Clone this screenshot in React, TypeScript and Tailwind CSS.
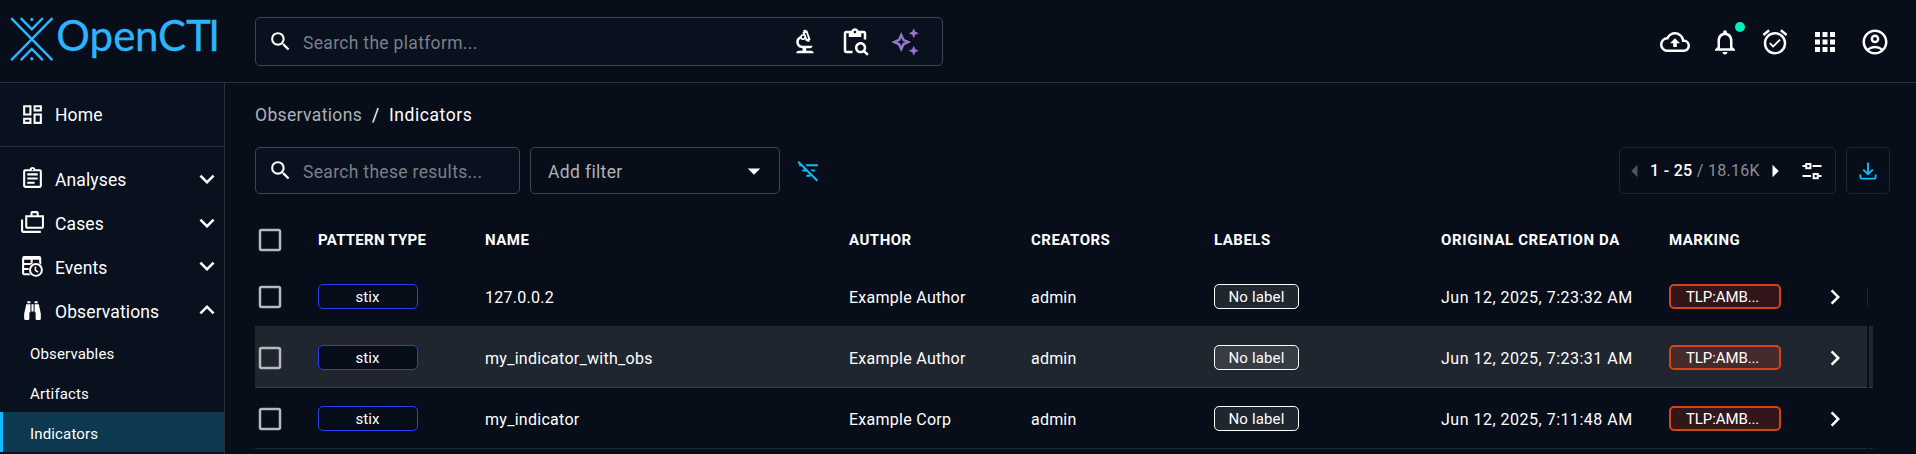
import type { ReactNode } from "react";
import {
  MdApps, MdArrowDropDown, MdArrowLeft, MdArrowRight, MdCheckBoxOutlineBlank, MdChevronRight,
  MdContentPasteSearch, MdExpandLess, MdExpandMore, MdFilterListOff, MdNotificationsNone,
  MdOutlineAccountCircle, MdOutlineAlarmOn, MdOutlineAssignment, MdOutlineAutoAwesome,
  MdOutlineBackup, MdOutlineBiotech, MdOutlineCases, MdOutlineDashboard, MdSearch,
} from "react-icons/md";

function Logo() {
  return (
    <svg width="224" height="82" viewBox="0 0 224 82" fill="none" stroke="#2cb5ff" strokeWidth="2.4">
      <path d="M11.2 18.2 52.4 60.2M52.4 18.2 11.2 60.2M20.8 18.2 31.8 29.4 42.8 18.2M20.8 60.2 31.8 49 42.8 60.2" />
      <path d="m31.8 17.6 2 2-2 2-2-2zM31.8 56.8l2 2-2 2-2-2z" fill="#2cb5ff" stroke="none" />
      <text
        x="56.3 89.6 113.2 135 158 186 208.2"
        y="51.3"
        fill="#2cb5ff"
        stroke="#2cb5ff"
        strokeWidth="0.3"
        className="font-[Lato] text-[42px]"
      >
        OpenCTI
      </text>
    </svg>
  );
}

function TableClockIcon() {
  return (
    <svg width="25" height="25" viewBox="0 0 24 24" fill="none">
      <rect x="3" y="3" width="16.4" height="16.4" rx="1" stroke="white" strokeWidth="2" />
      <path d="M3 4.5h16.4M3 9.6h16.4M3 14.4h9M11.2 4v15" stroke="white" strokeWidth="1.9" />
      <circle cx="15.3" cy="15.3" r="7.2" fill="#09101e" />
      <circle cx="15.3" cy="15.3" r="5.7" stroke="white" strokeWidth="1.9" />
      <path d="M14.8 12v3.7l2.6 1.6" stroke="white" strokeWidth="1.5" />
    </svg>
  );
}

function BinocularsIcon() {
  return (
    <svg width="25" height="25" viewBox="0 0 24 24" fill="white">
      <path d="M11,6H13V13H11V6M9,20A1,1 0 0,1 8,21H5A1,1 0 0,1 4,20V15L6,6H10V13A1,1 0 0,1 9,14V20M10,5H7V3H10V5M15,20V14A1,1 0 0,1 14,13V6H18L20,15V20A1,1 0 0,1 19,21H16A1,1 0 0,1 15,20M14,5V3H17V5H14Z" />
    </svg>
  );
}

function TuneIcon() {
  return (
    <svg width="20" height="18" viewBox="0 0 20 18" fill="none" stroke="white" strokeWidth="2">
      <path d="M0.5 4H3.5M10.5 4H19.5M0.5 14H9M16.5 14H19.5" />
      <rect x="4.2" y="2" width="4.2" height="4.2" />
      <rect x="11.6" y="12" width="4.2" height="4.2" />
    </svg>
  );
}

function DownloadIcon() {
  return (
    <svg width="18" height="18" viewBox="0 0 18 18" fill="none" stroke="#0fbcff" strokeWidth="1.9">
      <path d="M9 0.5v11.5M4.2 7.6 9 12.2 13.8 7.6" />
      <path d="M1.4 12.6v2.8q0 1.2 1.2 1.2h12.8q1.2 0 1.2-1.2v-2.8" />
    </svg>
  );
}

function NavItem({ icon, label, open }: { icon: ReactNode; label: string; open?: boolean }) {
  return (
    <div className="flex h-[43.75px] items-center pl-5 pr-[2px] text-white">
      <span className="flex w-[35px]">{icon}</span>
      <span
        className={
          open === undefined
            ? "flex-1 pt-px text-[17.5px] leading-6 tracking-[0.12px]"
            : "flex-1 pt-[3px] text-[17.5px] leading-6 tracking-[0.12px]"
        }
      >
        {label}
      </span>
      {open === undefined ? null : open ? <MdExpandLess size={30} /> : <MdExpandMore size={30} />}
    </div>
  );
}

function SubItem({ label, active }: { label: string; active?: boolean }) {
  return (
    <div
      className={
        active
          ? "flex h-10 items-center border-l-[3px] border-[#0fbcff] bg-[#0c3850] pl-[27px]"
          : "flex h-10 items-center pl-[30px]"
      }
    >
      <span className="pt-[3px] text-[15px] leading-5 tracking-[0.15px] text-white">{label}</span>
    </div>
  );
}

const columns = "grid h-full flex-1 grid-cols-[63px_167px_364px_182px_183px_227px_228px_151px_1fr] items-center";

const rows = [
  { name: "127.0.0.2", author: "Example Author", date: "Jun 12, 2025, 7:23:32 AM", hovered: false },
  { name: "my_indicator_with_obs", author: "Example Author", date: "Jun 12, 2025, 7:23:31 AM", hovered: true },
  { name: "my_indicator", author: "Example Corp", date: "Jun 12, 2025, 7:11:48 AM", hovered: false },
];

function Row({ row, first, last }: { row: (typeof rows)[number]; first: boolean; last: boolean }) {
  const tone = row.hovered
    ? "border-b border-[#3a3f47] bg-[#20262f]"
    : last
      ? "border-b border-[#23282f]"
      : "border-b border-[#20262f]";
  return (
    <div className="flex h-[61px]">
      <div className={`${columns} pt-px ${tone}`}>
        <MdCheckBoxOutlineBlank size={30} className="text-[#b7b9bd]" />
        <span className="flex h-[25px] w-[100px] items-center justify-center rounded-[5px] border border-[#263ff2] bg-[#070d19] pr-px pt-[2px] text-[15px] tracking-[0.1px]">
          stix
        </span>
        <span className="pt-[3px] text-base tracking-[0.28px]">{row.name}</span>
        <span className="pt-[3px] text-base tracking-[0.27px]">{row.author}</span>
        <span className="pt-[3px] text-base tracking-[0.2px]">admin</span>
        <span
          className={`flex h-[25px] w-[85px] items-center justify-center rounded-[5px] border border-white pt-[2px] text-[15px] tracking-[0.15px] ${row.hovered ? "bg-[#383c45]" : "bg-[#20262f]"}`}
        >
          No label
        </span>
        <span className="whitespace-nowrap pt-[3px] text-base tracking-[0.5px]">{row.date}</span>
        <span
          className={`flex h-[25px] w-28 items-center rounded-[5px] border-2 border-[#d84315] pl-[15px] pt-[2px] text-[15px] tracking-[-0.1px] ${row.hovered ? "bg-[#462b2c]" : "bg-[#321619]"}`}
        >
          TLP:AMB...
        </span>
        <MdChevronRight size={30} />
      </div>
      <div className="flex w-[2px] items-center">
        {first ? <div className="h-[18px] w-px bg-[#20262f]" /> : null}
      </div>
      <div className={`w-1 ${tone}`} />
    </div>
  );
}

export default function App() {
  return (
    <div className="flex h-[454px] w-[1916px] flex-col overflow-hidden bg-[#070d19] font-[Roboto,sans-serif] text-white">
      <header className="flex h-[83px] shrink-0 border-b border-[#2a2e38]">
        <div className="w-[255px]">
          <Logo />
        </div>
        <div className="mt-[17px] flex h-[49px] w-[688px] items-center rounded-[5px] border border-[#41454e] bg-[#09101e] pl-[12px] pr-[22px]">
          <MdSearch size={25} />
          <span className="flex-1 pl-[10px] pt-[2px] text-[17.5px] leading-6 tracking-[0.32px] text-[#7c7f86]">
            Search the platform...
          </span>
          <div className="flex gap-5">
            <MdOutlineBiotech size={30} />
            <MdContentPasteSearch size={30} />
            <MdOutlineAutoAwesome size={30} className="text-[#9575cd]" />
          </div>
        </div>
        <div className="ml-auto mr-[26px] flex h-[84px] items-center gap-5">
          <MdOutlineBackup size={30} />
          <div className="relative">
            <MdNotificationsNone size={30} />
            <span className="absolute -top-[5px] right-[-5px] size-[10px] rounded-full bg-[#00f1bd]" />
          </div>
          <MdOutlineAlarmOn size={30} />
          <MdApps size={30} />
          <MdOutlineAccountCircle size={30} />
        </div>
      </header>
      <div className="flex min-h-0 flex-1">
        <nav className="w-[225px] shrink-0 border-r border-[#2a2e38] bg-[#09101e]">
          <div className="flex h-16 flex-col justify-center border-b border-[#2a2e38]">
            <NavItem icon={<MdOutlineDashboard size={25} />} label="Home" />
          </div>
          <div className="pt-[10px]">
            <NavItem icon={<MdOutlineAssignment size={25} />} label="Analyses" open={false} />
            <NavItem icon={<MdOutlineCases size={25} />} label="Cases" open={false} />
            <NavItem icon={<TableClockIcon />} label="Events" open={false} />
            <NavItem icon={<BinocularsIcon />} label="Observations" open />
            <SubItem label="Observables" />
            <SubItem label="Artifacts" />
            <SubItem label="Indicators" active />
          </div>
        </nav>
        <main className="flex-1 pl-[30px]">
          <div className="flex pt-5 text-[17.5px] leading-6">
            <span className="w-[134px] tracking-[0.36px] text-[#b0b2b6]">
              Observations<span className="pl-[10px] text-white">/</span>
            </span>
            <span className="tracking-[0.55px]">Indicators</span>
          </div>
          <div className="mt-5 flex h-[47px] items-center pr-[26px]">
            <div className="flex h-[47px] w-[265px] items-center rounded-[5px] border border-[#41454e] bg-[#09101e] pl-[12px]">
              <MdSearch size={25} />
              <span className="pl-[10px] pt-[2px] text-[17.5px] leading-6 tracking-[0.32px] text-[#7c7f86]">
                Search these results...
              </span>
            </div>
            <div className="ml-[10px] flex h-[47px] w-[250px] items-center justify-between rounded-[5px] border border-[#41454e] pl-[17px] pr-[10px]">
              <span className="pt-[2px] text-[17.5px] leading-6 tracking-[0.36px] text-[#b0b2b6]">Add filter</span>
              <MdArrowDropDown size={30} />
            </div>
            <MdFilterListOff size={25} className="ml-4 text-[#0fbcff]" />
            <div className="ml-auto flex h-[47px] w-[217px] items-center rounded-[5px] border border-[#20252f]">
              <MdArrowLeft size={30} className="text-[#4f535b]" />
              <span className="w-[110px] whitespace-nowrap pt-px text-base font-medium tracking-[0.3px]">
                1 - 25 <span className="font-normal text-[#8b8e94]">/ 18.16K</span>
              </span>
              <MdArrowRight size={30} />
              <span className="pl-[12px]">
                <TuneIcon />
              </span>
            </div>
            <div className="ml-[10px] flex h-[47px] w-11 items-center justify-center rounded-[5px] border border-[#20252f]">
              <DownloadIcon />
            </div>
          </div>
          <div className="flex h-[72px] w-[1612px] pt-[20px]">
            <div className={`${columns} text-[15px] font-bold tracking-[0.5px]`}>
              <MdCheckBoxOutlineBlank size={30} className="text-[#b7b9bd]" />
              <span className="pt-px tracking-[0.25px]">PATTERN TYPE</span>
              <span className="pt-px">NAME</span>
              <span className="pt-px">AUTHOR</span>
              <span className="pt-px">CREATORS</span>
              <span className="pt-px">LABELS</span>
              <span className="w-[179px] overflow-hidden whitespace-nowrap pt-px tracking-[0.62px]">
                ORIGINAL CREATION DA
              </span>
              <span className="pt-px">MARKING</span>
            </div>
          </div>
          <div className="w-[1618px]">
            {rows.map((row, i) => (
              <Row key={row.name} row={row} first={i === 0} last={i === rows.length - 1} />
            ))}
          </div>
        </main>
      </div>
    </div>
  );
}
